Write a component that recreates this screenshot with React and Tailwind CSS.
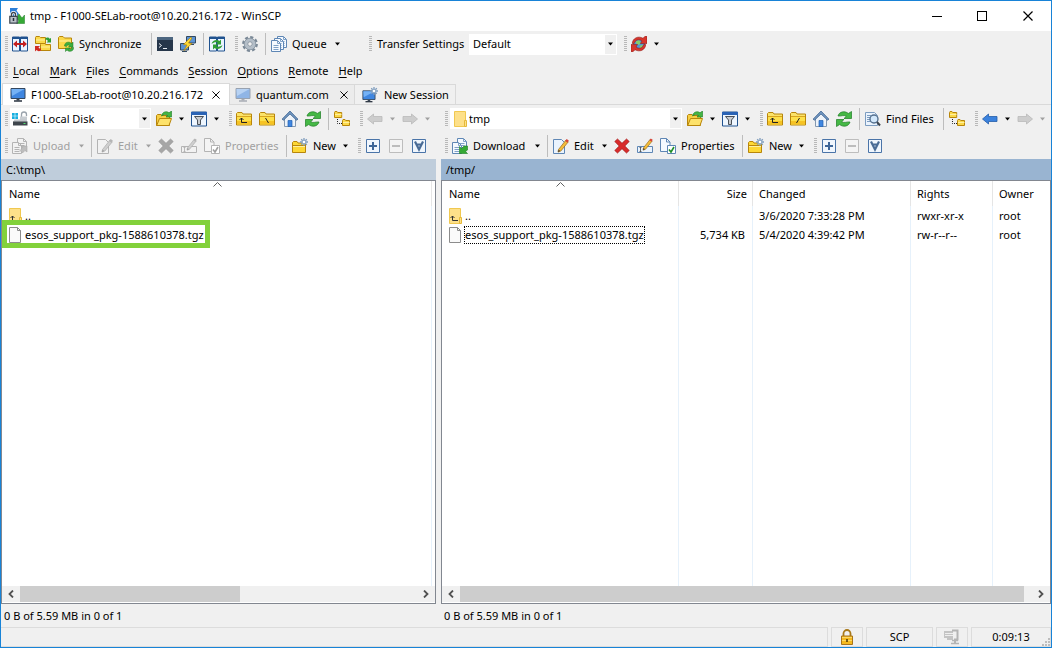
import { clsx } from "clsx"

function Svg({ children, className }) {
  return (
    <svg
      viewBox="0 0 16 16"
      className={clsx("h-4 w-4 shrink-0", className)}
      fill="none"
      aria-hidden="true"
    >
      {children}
    </svg>
  )
}

function FolderShape() {
  return (
    <>
      <path d="M.5 14V2.500l1-1H6l1 1.500h8.500v11z" fill="#fbe36a" stroke="#b8860b" />
      <path d="M1 5.500h14" stroke="#d9a520" />
      <path d="M1 6h14v4H1z" fill="#fde04a" />
      <path d="M1 10h14v3.500H1z" fill="#f6c324" />
    </>
  )
}

function Spark({ x = 12, y = 4 }) {
  return (
    <g transform={`translate(${x} ${y})`}>
      <path d="M0-4V4M-4 0H4M-2.800-2.800l5.600 5.600M2.800-2.800l-5.600 5.600" stroke="#7f9dbd" strokeWidth="1.300" />
      <circle r="1.800" fill="#fff" stroke="#8fabc8" />
    </g>
  )
}

function MonitorShape({ pale }) {
  return (
    <>
      <path d="M1 1.500h14v10H1z" fill={pale ? "#8fb5e6" : "#3f86e0"} stroke={pale ? "#98a2b0" : "#33475f"} />
      <path d="M1.500 2h13L2 9z" fill={pale ? "#b7d2f3" : "#75b2f5"} />
      <path d="M6.500 12h3v1.500h-3z" fill={pale ? "#a8adb5" : "#3b4655"} />
      <path d="M4 14h8" stroke={pale ? "#a8adb5" : "#2b3440"} strokeWidth="1.500" />
    </>
  )
}

function PageShape({ x = 0, y = 0, gray }) {
  return (
    <g transform={`translate(${x} ${y})`}>
      <path d="M.5.5h6l3 3v8h-9z" fill={gray ? "#f2f2f2" : "#f4f9ff"} stroke={gray ? "#b4b4b4" : "#5f87b5"} />
      <path d="M6.500.5v3h3M2.500 5.500h5M2.500 7.500h5M2.500 9.500h5" stroke={gray ? "#b4b4b4" : "#7fa1c6"} />
    </g>
  )
}

function PencilShape({ gray }) {
  return (
    <>
      <path d="M5.500 11.500L13 2l2.300 1.800-7.500 9.300-2.800 1z" fill={gray ? "#cfcfcf" : "#f4bd3a"} stroke={gray ? "#aaa" : "#96671a"} strokeWidth=".7" />
      <path d="M12.200 3l1.400-2 2.200 1.600L14.400 4.700z" fill={gray ? "#b5b5b5" : "#d8453a"} />
      <path d="M5 14l.7-2.300 1.500 1.300z" fill={gray ? "#999" : "#333"} />
    </>
  )
}

function AppIcon() {
  return (
    <Svg>
      <path d="M1 0h8L7.500 2.500 10 6 7 9H6L1 6z" fill="#2d7fd8" />
      <path d="M15.500 15.500h-8l2.500-2.500-3-3 3-4 3 4 2.500-3z" fill="#35a935" stroke="#1d7a22" strokeWidth=".5" />
      <path d="M2.500 8.500V6.500a2 2 0 0 1 4 0v2" stroke="#fff" strokeWidth="3" />
      <path d="M2.500 8.500V6.500a2 2 0 0 1 4 0v2" stroke="#3d4650" strokeWidth="1.400" />
      <path d="M.8 8.300h7.400v6.900H.8z" fill="#b9c0c8" stroke="#3d4650" strokeWidth="1.200" />
      <path d="M4.500 10v3" stroke="#27303a" strokeWidth="1.500" />
    </Svg>
  )
}

function CompareIcon() {
  return (
    <Svg>
      <path d="M.5 1h7v14h-7zM8.500 1h7v14h-7z" fill="#eaf4ff" stroke="#20528f" />
      <path d="M0 2h8M8 2h8" stroke="#20528f" strokeWidth="2" />
      <path d="M1 8l4-3.500V7h6V4.500L15 8l-4 3.500V9H5v2.500z" fill="#c31f1f" />
    </Svg>
  )
}

function SyncBrowseIcon() {
  return (
    <Svg>
      <path d="M.5 7.500v-6l.5-1h3.500l1 1h5v6zM5.500 14.500v-6l.5-1h3.500l1 1h5v6z" fill="#fbd94a" stroke="#b8860b" />
      <path d="M1 4h9M6 11h9" stroke="#fff0a0" />
      <path d="M10.500 2c2-1 3.500-.5 4 .8L16 2v4.500h-4.500l1.300-1.300C12.500 4 11.500 3.500 10.500 4z" fill="#2e9e35" />
      <path d="M6 14.500c-2 1-3.500.8-4.500-.5L0 15.500V10h5l-1.500 1.500c.5 1 1.500 1.200 2.500 1z" fill="#d02a20" />
    </Svg>
  )
}

function SynchronizeIcon() {
  return (
    <Svg>
      <path d="M.5 12.500v-11l1-1H5l1.500 1.500h7v10.500z" fill="#fbd94a" stroke="#b8860b" />
      <path d="M1 5h12" stroke="#fff0a0" />
      <path d="M6.500 10c0-4 4.500-5 7-2.500l1.500-1.500V11h-4.500l1.200-1.300C10.500 8.500 9 9 8.500 10.500z" fill="#3dae3f" stroke="#1c7c24" strokeWidth=".5" />
      <path d="M15.700 11.500c0 4-4.700 5-6.700 2.500L7.500 15.500V12H12l-1.200 1c1.500.7 2.700 0 3-1.500z" fill="#3dae3f" stroke="#1c7c24" strokeWidth=".5" />
    </Svg>
  )
}

function TerminalIcon() {
  return (
    <Svg>
      <path d="M0 1h16v14H0z" fill="#26364a" />
      <path d="M0 1h16v3H0z" fill="#4d6680" />
      <path d="M2 7.500L4.500 9.500 2 11.500M6 12.500h4" stroke="#e9eef4" />
    </Svg>
  )
}

function PuttyIcon() {
  return (
    <Svg>
      <path d="M6.500.5h9v6.500h-9zM.5 7.500h8V14h-8z" fill="#5a93d6" stroke="#34495e" />
      <path d="M10 8.500h4M2 15.500h5" stroke="#34495e" />
      <path d="M10.500 1.500L3.500 8.500l3.500.5-3 5.500 8-7-3.500-.5L12 2z" fill="#fdd835" stroke="#b8860b" strokeWidth=".7" />
    </Svg>
  )
}

function SyncPanelsIcon() {
  return (
    <Svg>
      <path d="M.5 1h7v14h-7zM8.500 1h7v14h-7z" fill="#eaf4ff" stroke="#20528f" />
      <path d="M0 2h8M8 2h8" stroke="#20528f" strokeWidth="2" />
      <path d="M2.500 8C3.500 4 8 3 10.500 5L12 3.500v5H7l1.700-1.700C7 5.800 4.500 6.500 2.500 8z" fill="#2e9e35" />
      <path d="M13.500 9c-1 4-5.500 5-8 3L4 13.500v-5h5l-1.700 1.700c1.700 1 4.200.3 6.200-1.200z" fill="#2e9e35" />
    </Svg>
  )
}

function GearIcon() {
  return (
    <Svg>
      <circle cx="8" cy="8" r="6.700" stroke="#7b8997" strokeWidth="2.400" strokeDasharray="3.100 2.160" />
      <circle cx="8" cy="8" r="4.300" stroke="#b4bec8" strokeWidth="3.400" />
      <circle cx="8" cy="8" r="5.800" stroke="#7b8997" strokeWidth=".7" />
      <circle cx="8" cy="8" r="2.300" fill="#f1f1f1" stroke="#71808f" strokeWidth=".8" />
    </Svg>
  )
}

function QueueIcon() {
  return (
    <Svg>
      <PageShape x={6} y={0} />
      <PageShape x={3} y={2} />
      <PageShape x={0} y={4} />
    </Svg>
  )
}

function TransferPresetIcon() {
  return (
    <Svg>
      <circle cx="8" cy="8" r="6.200" fill="#4f93dc" />
      <path d="M4.500 5.500L8 4l2 2.500L8 9 5.500 8zM8.500 10l3.500-1.500-1 3.500-2 .5z" fill="#86cc6a" />
      <path d="M1.300 7.500C1.500 2 7.500-.5 12 2.300L14 .3h2V7.500H9.500L11 5C8 2.800 4.500 3.500 3.200 7.500z" fill="#d8352c" stroke="#931b16" strokeWidth=".6" />
      <path d="M14.700 8.500c-.2 5.500-6.200 8-10.700 5.200L2 15.700H0V8.500h6.500L5 11c3 2.200 6.500 1.500 7.800-2.500z" fill="#d8352c" stroke="#931b16" strokeWidth=".6" />
    </Svg>
  )
}

function MonitorIcon({ pale }) {
  return (
    <Svg>
      <MonitorShape pale={pale} />
    </Svg>
  )
}

function NewSessionIcon() {
  return (
    <Svg>
      <g transform="translate(0 2.500) scale(.87 .87)">
        <MonitorShape />
      </g>
      <Spark x={12} y={4} />
    </Svg>
  )
}

function DiskIcon() {
  return (
    <Svg>
      <path d="M0 2h2.700v2.700H0zM3.300 2H6v2.700H3.300zM0 5.300h2.700V8H0zM3.300 5.300H6V8H3.300z" fill="#16aee0" />
      <path d="M9.500 6V3.500a2.500 2.500 0 0 1 5 0V5" stroke="#9aa3ac" strokeWidth="1.300" />
      <path d="M8 5.500h7V10H8z" fill="#c8cdd2" />
      <path d="M2.500 8.500h11L15.500 11H1z" fill="#c2c6ca" />
      <path d="M1 10.500h14.500v4H1z" fill="#3f464d" />
      <path d="M11.500 12.500h2" stroke="#52e070" />
    </Svg>
  )
}

function OpenFolderIcon() {
  return (
    <Svg>
      <path d="M.5 14.500V4.500l1-1H5l1 1h7.500v10z" fill="#f7cf45" stroke="#b8860b" />
      <path d="M.7 14.500l2.800-7h12l-2.500 7z" fill="#fde26b" stroke="#b8860b" />
      <path d="M5.500 5C6 1 10.500-.5 13 1.800L15.500 0v6H10l1.500-1.500C9.500 3 7.500 3.500 5.500 5z" fill="#44b544" stroke="#1c7c24" strokeWidth=".6" />
    </Svg>
  )
}

function FilterIcon() {
  return (
    <Svg>
      <path d="M.5 1h15v14H.5z" fill="#eef6ff" stroke="#20528f" />
      <path d="M0 2.500h16" stroke="#2a63b5" strokeWidth="3" />
      <path d="M3.500 5.500h9L9.500 9v4.500h-3V9z" fill="#c9ccd0" stroke="#4a5057" />
    </Svg>
  )
}

function ParentFolderIcon() {
  return (
    <Svg>
      <FolderShape />
      <path d="M5.500 7v4.500H11M3.500 9l2-2 2 2" stroke="#222" />
    </Svg>
  )
}

function RootFolderIcon({ forward }) {
  return (
    <Svg>
      <FolderShape />
      <path d={forward ? "M6.500 12l3-5" : "M6.500 7l3 5"} stroke="#222" />
    </Svg>
  )
}

function HomeIcon() {
  return (
    <Svg>
      <path d="M2.500 7v8.500h11V7L8 2z" fill="#eef3f9" stroke="#8398b0" />
      <path d="M8 0L0 8.200l1.500 1L8 3l6.500 6.200 1.500-1z" fill="#6f94bd" stroke="#365d8c" strokeWidth=".7" />
      <path d="M6 9.500h4v6H6z" fill="#3f86e0" stroke="#2160b0" strokeWidth=".7" />
    </Svg>
  )
}

function RefreshIcon() {
  return (
    <Svg>
      <path d="M2 5C3 .5 9-.5 12.300 2.500L15.500.5v7H8l2.300-2.200C8 3.500 5 5.500 2 5z" fill="#45b845" stroke="#1c7c24" strokeWidth=".7" />
      <path d="M14 11C13 15.500 7 16.500 3.700 13.500L.5 15.500v-7H8l-2.300 2.200C8 12.500 11 10.500 14 11z" fill="#45b845" stroke="#1c7c24" strokeWidth=".7" />
    </Svg>
  )
}

function TreeIcon() {
  return (
    <Svg>
      <path d="M.5 6.500v-5l.5-1h2l.7 1h4v5zM8.500 14.500v-5l.5-1h2l.7 1h3.800v5z" fill="#fbd94a" stroke="#b8860b" />
      <path d="M1 3.500h6.500M9 11.500h6.500" stroke="#fff0a0" />
      <path d="M3.500 8v4.500H8" stroke="#222" strokeDasharray="1 1" />
    </Svg>
  )
}

function ArrowIcon({ right, gray }) {
  return (
    <Svg>
      <path
        d={right ? "M15.500 8L9.500 3v2.500H1v5h8.500V13z" : "M.5 8l6-5v2.500H15v5H6.500V13z"}
        fill={gray ? "#cdcdcd" : "#3b82dd"}
        stroke={gray ? "#b9b9b9" : "#245da8"}
        strokeWidth=".8"
      />
    </Svg>
  )
}

function TransferIcon({ gray }) {
  return (
    <Svg>
      <PageShape x={5} y={0} gray={gray} />
      <PageShape x={0} y={4} gray={gray} />
      <path
        d={gray ? "M15 8v6l-2-1.500L10.500 15 8 12.500 10.500 10 9 8z" : "M7.500 15.500v-7l2 2L12 8l3.500 0v4l-2 1.500 2 2z"}
        fill={gray ? "#bdbdbd" : "#35a935"}
        stroke={gray ? "#a8a8a8" : "#1c7c24"}
        strokeWidth=".6"
      />
    </Svg>
  )
}

function EditIcon({ gray }) {
  return (
    <Svg>
      <path d="M.5 1.500h8l3 3v11H.5z" fill={gray ? "#f2f2f2" : "#eaf3fd"} stroke={gray ? "#b4b4b4" : "#5f87b5"} />
      <PencilShape gray={gray} />
    </Svg>
  )
}

function DeleteIcon({ gray }) {
  return (
    <Svg>
      <path
        d="M3.500 1L8 5.300 12.500 1 15.200 3.500 10.800 8l4.400 4.500-2.700 2.500L8 10.700 3.500 15 .8 12.500 5.200 8 .8 3.500z"
        fill={gray ? "#a6a6a6" : "#d82a2a"}
        stroke={gray ? "#999" : "#a01515"}
        strokeWidth=".7"
      />
    </Svg>
  )
}

function RenameIcon({ gray }) {
  return (
    <Svg>
      <path d="M.5 8.500h15v6H.5z" fill={gray ? "#f2f2f2" : "#eaf3fd"} stroke={gray ? "#b4b4b4" : "#5f87b5"} />
      <path d="M2.500 9.500h2M2.500 13.500h2M3.500 9.500v4" stroke={gray ? "#aaa" : "#444"} strokeWidth=".8" />
      <g transform="translate(1.500 -.5) scale(.9)">
        <PencilShape gray={gray} />
      </g>
    </Svg>
  )
}

function PropertiesIcon({ gray }) {
  return (
    <Svg>
      <path d="M.5.5h6l3.500 3.500v9.500H.5z" fill={gray ? "#f4f4f4" : "#f4f9ff"} stroke={gray ? "#b4b4b4" : "#5f87b5"} />
      <path d="M6.500.5V4H10" stroke={gray ? "#b4b4b4" : "#5f87b5"} />
      <path d="M7.500 7.500h8v8h-8z" fill="#fff" stroke={gray ? "#b4b4b4" : "#5f87b5"} />
      <path d="M9 11.500l2 2.500 3-5" stroke={gray ? "#a0a0a0" : "#1f8f2a"} strokeWidth="1.600" />
    </Svg>
  )
}

function NewFolderIcon() {
  return (
    <Svg>
      <path d="M.5 14.500V4.500l1-1H5l1 1.500h7.500v9.500z" fill="#fdd835" stroke="#b8860b" />
      <path d="M1 7.500h12" stroke="#b8860b" />
      <path d="M1 8.500h12" stroke="#fff0a0" />
      <Spark x={12} y={4} />
    </Svg>
  )
}

function SelectBoxIcon({ kind }) {
  const gray = kind === "minus"
  return (
    <Svg>
      <path d="M1.500 1.500h13v13h-13z" fill={gray ? "#f4f4f4" : "#f0f6fd"} stroke={gray ? "#bdbdbd" : "#4a74a8"} />
      {kind === "plus" && <path d="M4 8h8M8 4v8" stroke="#3e6698" strokeWidth="2" />}
      {kind === "minus" && <path d="M4 8h8" stroke="#bdbdbd" strokeWidth="2" />}
      {kind === "invert" && <path d="M4 3.500l4 8 4-8M5 6.500h6" stroke="#4a6c96" strokeWidth="2.200" />}
    </Svg>
  )
}

function FindIcon() {
  return (
    <Svg>
      <path d="M.5 1.500h9l3 3v10H.5z" fill="#eaf3fd" stroke="#7c9cc0" />
      <path d="M2 4.500h4M2 6.500h3M2 8.500h3M2 10.500h4" stroke="#7c9cc0" />
      <circle cx="9" cy="8" r="4" fill="#d3e8fb" stroke="#55708e" strokeWidth="1.400" />
      <path d="M12 11l3 3.500" stroke="#3d4650" strokeWidth="2" />
    </Svg>
  )
}

function LockIcon() {
  return (
    <Svg>
      <path d="M4.500 8V4.500a3.500 3.500 0 0 1 7 0V8" stroke="#a8791a" strokeWidth="1.800" />
      <path d="M2.500 7h11v8.500h-11z" fill="#f5b91f" stroke="#a8741a" />
      <path d="M3 8.500h10M3 11.500h10" stroke="#fbd867" />
      <path d="M8 10v3" stroke="#4d3607" strokeWidth="1.500" />
    </Svg>
  )
}

function CompressionIcon() {
  return (
    <Svg>
      <path d="M0 2h9v9H3V9H0z" fill="#c4c4c4" />
      <path d="M1 4.500h8M1 6.500h8" stroke="#eee" />
      <path d="M8 1.500h5.500v9H11V14" stroke="#b4b4b4" strokeWidth="2" />
      <path d="M7 14.500h8M8 11.500h6" stroke="#b4b4b4" strokeWidth="1.500" />
    </Svg>
  )
}

function SmallFolder({ up }) {
  return (
    <svg viewBox="0 0 13 16" className="h-4 w-[13px] shrink-0" fill="none" aria-hidden="true">
      <path d="M.5.500h11v15H.5z" fill="#fde08a" stroke="#f0c850" />
      <path d="M10.500 9.500h2v6h-2z" fill="#fde08a" stroke="#e5b93a" />
      {up && <path d="M3.500 8v4.500H9M1.500 10l2-2 2 2" stroke="#333" />}
    </svg>
  )
}

function FileIcon() {
  return (
    <svg viewBox="0 0 13 16" className="h-4 w-[13px] shrink-0" fill="none" aria-hidden="true">
      <path d="M.5.500h8l3 3v12H.5z" fill="#fafafa" stroke="#8c8c8c" />
      <path d="M8.500.500v3h3" stroke="#8c8c8c" />
    </svg>
  )
}

function Triangle() {
  return (
    <svg viewBox="0 0 7 4" className="h-1 w-[7px] shrink-0" fill="currentColor" aria-hidden="true">
      <path d="M1 .5h5L3.500 3.500z" />
    </svg>
  )
}

function CrossIcon({ className }) {
  return (
    <svg viewBox="0 0 10 10" className={className} stroke="currentColor" strokeWidth="1.200" aria-hidden="true">
      <path d="M.5.500l9 9M9.500.500l-9 9" />
    </svg>
  )
}

// Toolbar parts
function Grip({ first }) {
  return (
    <span className={clsx("flex shrink-0 justify-end", first ? "w-[7px]" : "w-2.5")}>
      <span className="h-4 w-[3px] bg-[repeating-linear-gradient(to_bottom,#b8b8b8_0_1px,transparent_1px_2px)]" />
    </span>
  )
}

function Sep() {
  return <span className="ml-1 mr-px h-[22px] w-px shrink-0 bg-[#bdbdbd]" />
}

function Tool({ icon, label, title, className, disabled }) {
  return (
    <button
      type="button"
      title={title ?? label}
      aria-label={title ?? label}
      disabled={disabled}
      className={clsx(
        "flex h-6 shrink-0 items-center gap-[5px] whitespace-nowrap pl-1",
        className ?? "w-[23px]",
        disabled ? "text-[#a0a0a0]" : "hover:bg-[#e1ecf7]"
      )}
    >
      {icon}
      {label}
    </button>
  )
}

function More({ title, disabled }) {
  return (
    <button
      type="button"
      aria-label={title}
      disabled={disabled}
      className={clsx("flex h-6 w-3 shrink-0 items-center pl-[3px]", disabled && "text-[#a0a0a0]")}
    >
      <Triangle />
    </button>
  )
}

function Combo({ label, value, icon, className }) {
  return (
    <span className={clsx("flex h-[21px] min-w-0 items-center bg-white pl-0.5 pr-px", className)}>
      {icon}
      <select
        aria-label={label}
        defaultValue={value}
        className="h-full min-w-0 flex-1 appearance-none bg-transparent pl-0.5 outline-none"
      >
        <option>{value}</option>
      </select>
      <span className="pointer-events-none flex h-[19px] w-[11px] items-center justify-center bg-[#f0f0f0]">
        <Triangle />
      </span>
    </span>
  )
}

function NavTools({ remote }) {
  return (
    <div className="flex h-[27px] shrink-0 items-center">
      <Grip first />
      <Combo
        label={remote ? "Remote directory" : "Local drive"}
        value={remote ? "tmp" : "C: Local Disk"}
        icon={remote ? <span className="flex pl-0.5"><SmallFolder /></span> : <DiskIcon />}
        className="ml-0.5 mr-px flex-1"
      />
      <Tool title="Open directory" icon={<OpenFolderIcon />} />
      <More title="Directory bookmarks" />
      <Tool title="Filter" icon={<FilterIcon />} />
      <More title="Filter options" />
      <Grip />
      <Tool title="Parent directory" icon={<ParentFolderIcon />} />
      <Tool title="Root directory" icon={<RootFolderIcon forward={remote} />} />
      <Tool title="Home directory" icon={<HomeIcon />} />
      <Tool title="Refresh" icon={<RefreshIcon />} />
      <Sep />
      {remote && (
        <>
          <Tool label="Find Files" icon={<FindIcon />} className="w-[78px]" />
          <Sep />
        </>
      )}
      <Tool title="Tree" icon={<TreeIcon />} />
      <Grip />
      <Tool title="Back" icon={<ArrowIcon gray={!remote} />} disabled={!remote} />
      <More title="Back history" disabled={!remote} />
      <Tool title="Forward" icon={<ArrowIcon right gray />} disabled />
      <More title="Forward history" disabled />
      <span className="w-[3px] shrink-0" />
    </div>
  )
}

function FileTools({ remote }) {
  const off = !remote
  return (
    <div className="flex h-[27px] shrink-0 items-center">
      <Grip first />
      {remote ? (
        <Tool label="Download" icon={<TransferIcon />} className="w-[83px]" />
      ) : (
        <Tool label="Upload" icon={<TransferIcon gray />} className="w-[67px]" disabled />
      )}
      <More title="Transfer options" disabled={off} />
      <Sep />
      <Tool label="Edit" icon={<EditIcon gray={off} />} className="w-[49px]" disabled={off} />
      <More title="Edit options" disabled={off} />
      <Tool title="Delete" icon={<DeleteIcon gray={off} />} disabled={off} />
      <Tool title="Rename" icon={<RenameIcon gray={off} />} disabled={off} />
      <Tool label="Properties" icon={<PropertiesIcon gray={off} />} className="w-[82px]" disabled={off} />
      <Sep />
      <Tool label="New" icon={<NewFolderIcon />} className="w-[51px]" />
      <More title="New options" />
      <Grip />
      <Tool title="Select files" icon={<SelectBoxIcon kind="plus" />} />
      <Tool title="Unselect files" icon={<SelectBoxIcon kind="minus" />} disabled />
      <Tool title="Invert selection" icon={<SelectBoxIcon kind="invert" />} />
    </div>
  )
}

function ScrollBar({ thumb }) {
  const arrow = "flex h-full w-[18px] shrink-0 items-center justify-center text-[#505050]"
  return (
    <div className="flex h-[17px] shrink-0 items-center border-b border-white bg-[#f0f0f0]">
      <button type="button" aria-label="Scroll left" className={arrow}>
        <svg viewBox="0 0 6 8" className="h-2 w-1.5" fill="none" stroke="currentColor" strokeWidth="1.800">
          <path d="M5 .5L1.500 4 5 7.500" />
        </svg>
      </button>
      <span className="h-full min-w-0 flex-1">
        <span className={clsx("block h-full bg-[#cdcdcd]", thumb)} />
      </span>
      <button type="button" aria-label="Scroll right" className={arrow}>
        <svg viewBox="0 0 6 8" className="h-2 w-1.5" fill="none" stroke="currentColor" strokeWidth="1.800">
          <path d="M1 .5L4.500 4 1 7.500" />
        </svg>
      </button>
    </div>
  )
}

const COLUMNS = [
  { key: "size", label: "Size", width: "w-[74px]", align: "pr-[5px] text-right" },
  { key: "changed", label: "Changed", width: "w-[158px]", align: "pl-1.5 text-left" },
  { key: "rights", label: "Rights", width: "w-[82px]", align: "pl-1.5 text-left" },
  { key: "owner", label: "Owner", width: "w-[57px]", align: "pl-1.5 text-left", last: true },
]

const FILES = [
  { name: "..", up: true, size: "", changed: "3/6/2020 7:33:28 PM", rights: "rwxr-xr-x", owner: "root" },
  {
    name: "esos_support_pkg-1588610378.tgz",
    size: "5,734 KB",
    changed: "5/4/2020 4:39:42 PM",
    rights: "rw-r--r--",
    owner: "root",
  },
]

function FileList({ remote }) {
  const columns = remote ? COLUMNS : []
  const line = "border-r border-[#e6f1fb]"
  return (
    <div className={clsx("min-h-0 flex-1", !remote && "pr-[3px]")}>
      <table className="h-full w-full table-fixed border-separate border-spacing-0">
        <thead>
          <tr className="h-[25px]">
            <th className="relative border-r border-[#e5e5e5] pl-[7px] text-left font-normal">
              Name
              <svg
                viewBox="0 0 9 5"
                className="absolute left-1/2 top-px -ml-1 h-[5px] w-[9px]"
                fill="none"
                stroke="#606060"
                aria-hidden="true"
              >
                <path d="M.5 4.500l4-4 4 4" />
              </svg>
            </th>
            {columns.map((c) => (
              <th
                key={c.key}
                className={clsx(c.width, c.align, "font-normal", !c.last && "border-r border-[#e5e5e5]")}
              >
                {c.label}
              </th>
            ))}
          </tr>
        </thead>
        <tbody>
          {FILES.map((f) => (
            <tr key={f.name} className="h-[19px] whitespace-nowrap">
              <td className={clsx("relative p-0 pl-[7px]", line)}>
                <span className="flex h-[19px] items-center gap-0.5">
                  {f.up ? <SmallFolder up /> : <FileIcon />}
                  <span
                    className={clsx(
                      "border border-dotted leading-4",
                      remote && !f.up ? "border-black" : "border-transparent"
                    )}
                  >
                    {f.name}
                  </span>
                </span>
                {!remote && !f.up && (
                  <span className="pointer-events-none absolute -top-[5px] left-0 h-7 w-[208px] border-[5px] border-[#82d13b]" />
                )}
              </td>
              {columns.map((c) => (
                <td key={c.key} className={clsx("p-0", c.align, !c.last && line, c.key === "size" && "pr-[7px]")}>
                  {f[c.key]}
                </td>
              ))}
            </tr>
          ))}
          <tr>
            <td className={line} />
            {columns.map((c) => (
              <td key={c.key} className={clsx(!c.last && line)} />
            ))}
          </tr>
        </tbody>
      </table>
    </div>
  )
}

function Panel({ remote }) {
  return (
    <section className="flex min-h-0 min-w-0 flex-col">
      <NavTools remote={remote} />
      <FileTools remote={remote} />
      <div
        className={clsx(
          "flex h-[21px] shrink-0 items-center pl-[5px]",
          remote ? "bg-[#99b4d1]" : "bg-[#bfcddb]"
        )}
      >
        {remote ? "/tmp/" : "C:\\tmp\\"}
      </div>
      <div className="flex min-h-0 flex-1 flex-col border border-[#828790] bg-white">
        <FileList remote={remote} />
        <ScrollBar thumb={remote ? "w-[98.6%]" : "w-[55.5%]"} />
      </div>
      <div className="flex h-[23px] shrink-0 items-center pl-[3px]">0 B of 5.59 MB in 0 of 1</div>
    </section>
  )
}

const MENUS = ["Local", "Mark", "Files", "Commands", "Session", "Options", "Remote", "Help"]

function TitleBar() {
  return (
    <header className="flex h-[30px] shrink-0 items-center bg-white pl-2">
      <AppIcon />
      <h1 className="flex-1 pl-[5px]">tmp - F1000-SELab-root@10.20.216.172 - WinSCP</h1>
      <button type="button" aria-label="Minimize" className="flex h-full w-[45px] items-center justify-center">
        <span className="h-px w-2.5 bg-black" />
      </button>
      <button type="button" aria-label="Maximize" className="flex h-full w-[46px] items-center justify-center">
        <span className="h-2.5 w-2.5 border border-black" />
      </button>
      <button type="button" aria-label="Close" className="flex h-full w-[46px] items-center justify-center">
        <CrossIcon className="h-2.5 w-2.5" />
      </button>
    </header>
  )
}

function MainTools() {
  return (
    <div className="flex h-[26px] shrink-0 items-center">
      <Grip first />
      <Tool title="Compare directories" icon={<CompareIcon />} />
      <Tool title="Synchronize browsing" icon={<SyncBrowseIcon />} />
      <Tool label="Synchronize" icon={<SynchronizeIcon />} className="w-[93px]" />
      <Sep />
      <Tool title="Open terminal" icon={<TerminalIcon />} />
      <Tool title="Open in PuTTY" icon={<PuttyIcon />} />
      <Sep />
      <Tool title="Find and synchronize" icon={<SyncPanelsIcon />} />
      <Grip />
      <Tool title="Preferences" icon={<GearIcon />} />
      <Sep />
      <Tool label="Queue" icon={<QueueIcon />} className="w-16" />
      <More title="Queue options" />
      <span className="w-[19px]" />
      <Grip />
      <span className="w-[97px] whitespace-nowrap pl-[5px]">Transfer Settings</span>
      <Combo label="Transfer Settings" value="Default" className="w-[148px] pl-0" />
      <Grip />
      <Tool title="Transfer preset" icon={<TransferPresetIcon />} />
      <More title="Transfer preset options" />
    </div>
  )
}

function Tabs() {
  return (
    <nav className="flex h-[22px] shrink-0 items-end border-b border-[#d9d9d9] pl-px">
      <div className="-mb-px flex h-[22px] w-[228px] items-center border border-b-0 border-[#d9d9d9] bg-white pl-[7px]">
        <MonitorIcon />
        <button type="button" className="w-[186px] whitespace-nowrap pl-[5px] text-left">
          F1000-SELab-root@10.20.216.172
        </button>
        <button type="button" aria-label="Close tab">
          <CrossIcon className="h-2 w-2" />
        </button>
      </div>
      <div className="flex h-5 w-[125px] items-center border-r border-t border-[#d9d9d9] bg-[#ececec] pl-[5px]">
        <MonitorIcon pale />
        <button type="button" className="w-[89px] pl-[5px] text-left">
          quantum.com
        </button>
        <button type="button" aria-label="Close tab">
          <CrossIcon className="h-2 w-2" />
        </button>
      </div>
      <button
        type="button"
        className="flex h-5 w-[101px] items-center gap-1.5 border-r border-t border-[#d9d9d9] pl-[7px]"
      >
        <NewSessionIcon />
        New Session
      </button>
    </nav>
  )
}

function StatusBar() {
  const cell = "flex h-5 shrink-0 items-center justify-center border border-[#dcdcdc]"
  return (
    <footer className="flex h-5 shrink-0 gap-[3px]">
      <span className="h-5 flex-1 border border-l-0 border-[#dcdcdc]" />
      <span className={clsx(cell, "w-8")}>
        <LockIcon />
      </span>
      <span className={clsx(cell, "w-[67px]")}>SCP</span>
      <span className={clsx(cell, "w-8")}>
        <CompressionIcon />
      </span>
      <span className={clsx(cell, "relative w-20")}>
        0:09:13
        <svg viewBox="0 0 8 8" className="absolute bottom-0 right-0 h-2 w-2" fill="#bdbdbd" aria-hidden="true">
          <path d="M6 0h2v2H6zM3 3h2v2H3zM6 3h2v2H6zM0 6h2v2H0zM3 6h2v2H3zM6 6h2v2H6z" />
        </svg>
      </span>
    </footer>
  )
}

export default function App() {
  return (
    <div className="flex h-screen w-full flex-col overflow-hidden border border-[#1883d7] bg-[#f0f0f0] font-['Noto_Sans','Open_Sans',sans-serif] text-[11px] leading-4 text-black">
      <TitleBar />
      <MainTools />
      <div className="flex h-[26px] shrink-0 items-center pt-px">
        <Grip first />
        <nav className="flex gap-2.5 pl-[5px]">
          {MENUS.map((m) => (
            <button key={m} type="button">
              <span className="underline decoration-1 underline-offset-2">{m[0]}</span>
              {m.slice(1)}
            </button>
          ))}
        </nav>
      </div>
      <Tabs />
      <main className="grid min-h-0 flex-1 grid-cols-[435fr_610fr] gap-[5px]">
        <Panel />
        <Panel remote />
      </main>
      <StatusBar />
    </div>
  )
}
